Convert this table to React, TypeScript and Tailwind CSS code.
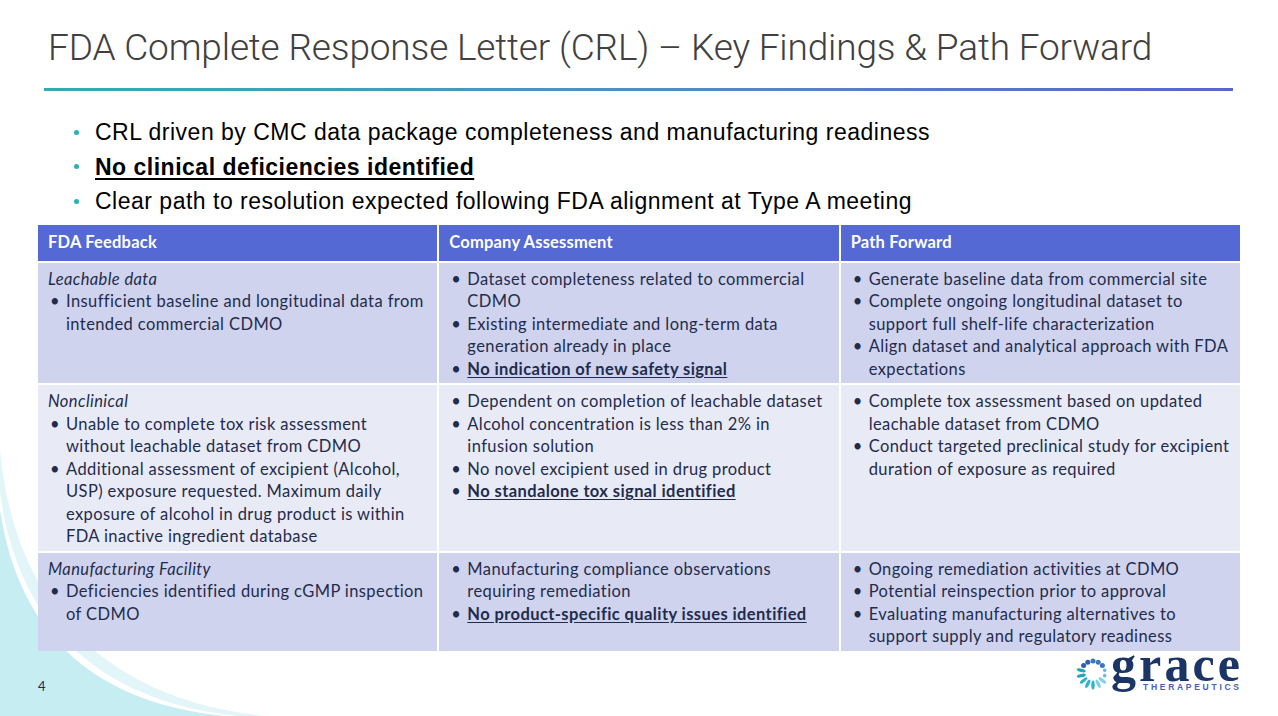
import React from 'react';

type Cell = { title?: string; items: { text: string; strong?: boolean }[] };

const rows: Cell[][] = [
  [
    {
      title: 'Leachable data',
      items: [{ text: 'Insufficient baseline and longitudinal data from intended commercial CDMO' }],
    },
    {
      items: [
        { text: 'Dataset completeness related to commercial CDMO' },
        { text: 'Existing intermediate and long-term data generation already in place' },
        { text: 'No indication of new safety signal', strong: true },
      ],
    },
    {
      items: [
        { text: 'Generate baseline data from commercial site' },
        { text: 'Complete ongoing longitudinal dataset to support full shelf-life characterization' },
        { text: 'Align dataset and analytical approach with FDA expectations' },
      ],
    },
  ],
  [
    {
      title: 'Nonclinical',
      items: [
        { text: 'Unable to complete tox risk assessment without leachable dataset from CDMO' },
        {
          text: 'Additional assessment of excipient (Alcohol, USP) exposure requested. Maximum daily exposure of alcohol in drug product is within FDA inactive ingredient database',
        },
      ],
    },
    {
      items: [
        { text: 'Dependent on completion of leachable dataset' },
        { text: 'Alcohol concentration is less than 2% in infusion solution' },
        { text: 'No novel excipient used in drug product' },
        { text: 'No standalone tox signal identified', strong: true },
      ],
    },
    {
      items: [
        { text: 'Complete tox assessment based on updated leachable dataset from CDMO' },
        { text: 'Conduct targeted preclinical study for excipient duration of exposure as required' },
      ],
    },
  ],
  [
    {
      title: 'Manufacturing Facility',
      items: [{ text: 'Deficiencies identified during cGMP inspection of CDMO' }],
    },
    {
      items: [
        { text: 'Manufacturing compliance observations requiring remediation' },
        { text: 'No product-specific quality issues identified', strong: true },
      ],
    },
    {
      items: [
        { text: 'Ongoing remediation activities at CDMO' },
        { text: 'Potential reinspection prior to approval' },
        { text: 'Evaluating manufacturing alternatives to support supply and regulatory readiness' },
      ],
    },
  ],
];

const rowBg = ['bg-[#cfd3ee]', 'bg-[#e8eaf6]', 'bg-[#cfd3ee]'];

// ring of dots/petals + wordmark
const GraceLogo = () => {
  const parts = [];
  const cx = 19;
  const cy = 24;
  for (let i = 0; i < 14; i++) {
    const a = (i / 14) * Math.PI * 2 - Math.PI / 2;
    const deg = (a * 180) / Math.PI;
    const x = cx + Math.cos(a) * 12;
    const y = cy + Math.sin(a) * 12;
    const d = (deg + 360) % 360;
    if (d >= 210 && d <= 330) {
      parts.push(<circle key={i} cx={x} cy={y} r={2.5} fill={d < 270 ? '#2f5fb3' : '#3b76c4'} />);
    } else if (d > 330 || d < 20) {
      parts.push(<circle key={i} cx={x} cy={y} r={1.8} fill="#6cb8e3" />);
    } else {
      parts.push(
        <ellipse
          key={i}
          cx={x}
          cy={y}
          rx={4.6}
          ry={1.7}
          transform={`rotate(${deg} ${x} ${y})`}
          fill={d < 90 ? '#7fd0e8' : d < 150 ? '#2bb3c8' : '#1ea7b8'}
        />
      );
    }
  }
  return (
    <svg width="168" height="62" viewBox="0 -16 168 62" className="overflow-visible">
      {parts}
      <text
        x="37"
        y="32"
        fontFamily="'Liberation Serif', serif"
        fontWeight="bold"
        fontSize="50"
        fill="#1b3566"
        textLength="129"
        lengthAdjust="spacing"
      >
        grace
      </text>
      <text
        x="69"
        y="41"
        fontFamily="'Liberation Sans', Arial, sans-serif"
        fontWeight="bold"
        fontSize="8.5"
        fill="#4a5fb8"
        textLength="96"
        lengthAdjust="spacing"
      >
        THERAPEUTICS
      </text>
    </svg>
  );
};

export default function App() {
  return (
    <div className="relative w-[1278px] h-[716px] overflow-hidden bg-white">
      {/* corner waves */}
      <svg className="absolute left-0 bottom-0" width="300" height="280" viewBox="0 436 300 280">
        <path d="M0,450 C15,610 110,700 265,716 L0,716 Z" fill="#e2f5f8" />
        <path d="M0,492 C18,630 105,702 238,716 L0,716 Z" fill="#ffffff" />
        <path d="M0,510 C20,640 100,704 226,716 L0,716 Z" fill="#c6edf2" />
      </svg>

      <div className="relative flex flex-col">
        <h1 className="pl-[48px] pt-[26px] text-[37px] leading-[44px] font-light text-[#404040] font-['Roboto',sans-serif] tracking-[-0.15px]">
          FDA Complete Response Letter (CRL) – Key Findings &amp; Path Forward
        </h1>
        <div className="ml-[44px] mt-[18px] w-[1189px] h-[3px] bg-gradient-to-r from-[#35a9b5] via-[#4f8fc4] to-[#5a66c4]" />

        <ul className="ml-[74px] mt-[24px] font-['Liberation_Sans',Arial,sans-serif] text-[23px] leading-[34.5px] tracking-[0.5px] text-black">
          {[
            { t: 'CRL driven by CMC data package completeness and manufacturing readiness' },
            { t: 'No clinical deficiencies identified', b: true },
            { t: 'Clear path to resolution expected following FDA alignment at Type A meeting' },
          ].map((l) => (
            <li key={l.t} className="flex items-center">
              <span className="w-[5px] h-[5px] rounded-full bg-[#26b1b3] mr-[16px]" />
              <span className={l.b ? 'font-bold underline underline-offset-[3px] decoration-[1.5px]' : ''}>{l.t}</span>
            </li>
          ))}
        </ul>

        <div className="ml-[38px] mt-[6px] w-[1202px] grid grid-cols-3 gap-[2px] bg-white font-['Lato',sans-serif] text-[16.5px] leading-[22.5px] tracking-[0.4px] text-[#1f2c4c]">
          {['FDA Feedback', 'Company Assessment', 'Path Forward'].map((h) => (
            <div key={h} className="bg-[#5569d4] h-[36px] px-[10px] flex items-center text-white font-bold tracking-[0.2px]">
              {h}
            </div>
          ))}
          {rows.map((row, ri) =>
            row.map((cell, ci) => (
              <div key={`${ri}-${ci}`} className={`${rowBg[ri]} pl-[10px] pr-[8px] pt-[5px] pb-[3px]`}>
                {cell.title && <div className="italic">{cell.title}</div>}
                {cell.items.map((it) => (
                  <div key={it.text} className="flex">
                    <span className="w-[18px] shrink-0 pl-[2px]">•</span>
                    <span className={it.strong ? 'font-bold underline underline-offset-[2px]' : ''}>{it.text}</span>
                  </div>
                ))}
              </div>
            ))
          )}
        </div>

        <div className="flex justify-between items-start">
          <div className="ml-[38px] mt-[26px] text-[13px] text-[#1f2c4c] font-['Lato',sans-serif]">4</div>
          <div className="mr-[36px] mt-[-18px]">
            <GraceLogo />
          </div>
        </div>
      </div>
    </div>
  );
}
